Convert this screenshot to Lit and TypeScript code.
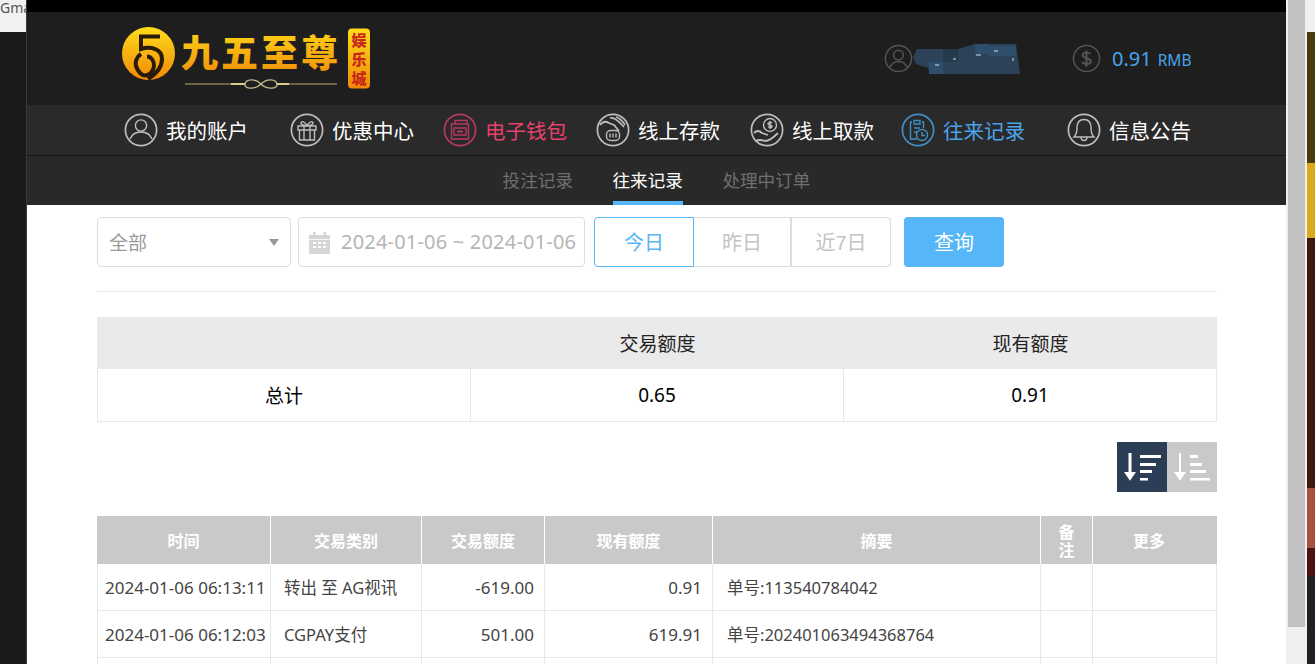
import { LitElement, html, css, svg } from "lit";
import { customElement } from "lit/decorators.js";

const ring = (color: string, inner: unknown) => html`<svg class="ic" viewBox="0 0 34 34" fill="none" stroke=${color} stroke-width="1.4">
  <circle cx="17" cy="17" r="15.6" stroke-width="1.7"></circle>${inner}</svg>`;

const icons: Record<string, unknown> = {
  user: svg`<circle cx="17" cy="12.5" r="5.6"/><path d="M6 26c2-5 6-7 11-7s9 2 11 7"/>`,
  gift: svg`<path d="M8 13h18v4H8zM9.500 17v10h15V17M14 13v14M20 13v14"/><path d="M17 12.500c-2-4-6-5-6-2.500 0 2 3 2.500 6 2.500zM17 12.500c2-4 6-5 6-2.500 0 2-3 2.500-6 2.500z"/>`,
  wallet: svg`<path d="M12 11V7.500h12V11M8.500 11h17v15h-17zM11 15h12v7H11z"/><path d="M14 18.500h6" stroke-width="2"/>`,
  dep: svg`<path d="M4 12c3-4 6-4 9-2l5 2 5 6M14 5c3-1 8 2 14 9M20 4c3 1 6 3 9 8" stroke-width="1.800"/><rect x="10.500" y="17.500" width="13" height="10" rx="4"/><path d="M14 20.500v4M17 20.500v4M20 20.500v4"/>`,
  wd: svg`<circle cx="20" cy="12" r="6.500"/><path d="M20 8v8M22 10c-1-1-4-1-4 .7s4 1 4 2.800-3 1-4 0"/><path d="M4 20c3-3 6-2 8 0l6 2M6 28c3-2 6-1 9 0 4 0 8-3 13-8" stroke-width="1.800"/>`,
  rec: svg`<path d="M11 9H9.500v17H16M21 9h1.500v6M13 7.500h6V11h-6zM13 15h6M13 19h3"/><circle cx="21" cy="22" r="5.500"/><path d="M21 19v3.500h3"/>`,
  bell: svg`<path d="M17 6.500c-5 0-7 4-7 8.500 0 5-1 7-3 9h20c-2-2-3-4-3-9 0-4.500-2-8.500-7-8.500z"/><path d="M14 24c0 2 1 3.500 3 3.500s3-1.500 3-3.500"/>`,
};

const navs = [
  { w: 166, k: "user", t: "我的账户" },
  { w: 153, k: "gift", t: "优惠中心" },
  { w: 153, k: "wallet", t: "电子钱包", c: "pink" },
  { w: 154, k: "dep", t: "线上存款" },
  { w: 151, k: "wd", t: "线上取款" },
  { w: 166, k: "rec", t: "往来记录", c: "blue" },
  { w: 130, k: "bell", t: "信息公告" },
];

const rows = [
  ["2024-01-06 06:13:11", "转出 至 AG视讯", "-619.00", "0.91", "单号:113540784042"],
  ["2024-01-06 06:12:03", "CGPAY支付", "501.00", "619.91", "单号:202401063494368764"],
  ["", "", "", "", ""],
];

@customElement("app-root")
export class AppRoot extends LitElement {
  static styles = css`
    :host {
      display: block;
      width: 1315px;
      height: 664px;
      overflow: hidden;
      background: #1a1a1a;
      font-family: "Liberation Sans", "Noto Sans CJK SC", sans-serif;
    }
    .screen { display: flex; height: 664px; align-items: stretch; }
    .left { width: 27px; flex: none; background: #1a1a1a; border-right: 1px solid #3a3a3a; box-sizing: border-box; }
    .tab { height: 32px; width: 26px; background: #f1f1f3; color: #555; font-family: "Noto Sans", sans-serif; font-size: 14px; line-height: 16px; overflow: hidden; white-space: nowrap; }
    .modal { width: 1259px; flex: none; background: #fff; height: 664px; overflow: hidden; }
    .blackbar { height: 12px; background: #000; }
    .head { height: 93px; background: #1e1e1e; display: flex; align-items: center; }
    .logo { width: 250px; height: 68px; margin-left: 94px; display: block; flex: none; }
    .logo-text { font-family: "Noto Sans CJK SC", sans-serif; font-weight: 900; }
    .who { margin-left: 513px; display: flex; align-items: center; flex: none; }
    .face { width: 29px; height: 29px; display: block; flex: none; }
    .blur { width: 107px; height: 30px; display: block; flex: none; margin-top: 1px; }
    .bal { margin-left: 52px; display: flex; align-items: center; gap: 11px; color: #4aa3ea; font-family: "Noto Sans", sans-serif; }
    .coin { width: 29px; height: 29px; display: block; flex: none; }
    .bal b { font-weight: 400; font-size: 20px; }
    .bal span { font-size: 15.500px; margin-left: 6px; }
    .nav { height: 51px; box-sizing: border-box; background: #2a2a2a; display: flex; padding-left: 97px; border-bottom: 1px solid #151515; }
    .nav-i { display: flex; align-items: center; gap: 8px; flex: none; color: #fff; font-size: 20.500px; box-sizing: border-box; white-space: nowrap; }
    .ic { width: 34px; height: 34px; display: block; flex: none; }
    .pink { color: #e8416c; }
    .blue { color: #4aa3ea; }
    .sub { height: 49px; background: #292929; display: flex; justify-content: center; gap: 39.500px; font-size: 17.600px; color: #6f6f6f; }
    .sub div { height: 49px; line-height: 50px; box-sizing: border-box; }
    .sub .on { color: #fff; border-bottom: 4px solid #56b6f7; }
    .body { padding: 12px 69px 0 70px; }
    .filters { display: flex; align-items: flex-start; height: 50px; }
    .box { box-sizing: border-box; height: 50px; border: 1px solid #ddd; border-radius: 4px; display: flex; align-items: center; color: #b5b5b5; font-size: 19px; padding-bottom: 2px; }
    .sel { width: 194px; padding: 0 11px 2px; justify-content: space-between; color: #999; }
    .arrow { width: 0; height: 0; border: 5px solid transparent; border-top: 7px solid #999; border-bottom: 0; margin-top: 3px; }
    .date { width: 287px; margin-left: 7px; padding-left: 9px; gap: 10px; white-space: nowrap; font-family: "Noto Sans", sans-serif; font-size: 20px; letter-spacing: .2px; }
    .date svg { width: 23px; height: 23px; display: block; flex: none; margin-top: 2px; }
    .tabs { display: flex; margin-left: 9px; }
    .tb { box-sizing: border-box; height: 50px; border: 1px solid #ddd; border-left: 0; display: flex; align-items: center; justify-content: center; color: #c4c4c4; font-size: 20px; padding-bottom: 2px; }
    .w98 { width: 98px; border-right-width: 2px; }
    .w99 { width: 99px; border-radius: 0 4px 4px 0; }
    .first { width: 100px; border: 1px solid #56b6f7; color: #56b6f7; border-radius: 4px 0 0 4px; }
    .query { width: 100px; height: 50px; margin-left: 13px; border-radius: 4px; background: #56b6f7; color: #fff; font-size: 20px; display: flex; align-items: center; justify-content: center; padding-bottom: 2px; box-sizing: border-box; }
    .hr { height: 1px; background: #e8e8e8; margin-top: 24px; }
    .sum { margin-top: 25px; display: grid; grid-template-columns: 374px 373px 373px; border-bottom: 1px solid #e8e8e8; box-sizing: border-box; }
    .sum > div { display: flex; align-items: center; justify-content: center; font-size: 19px; color: #222; box-sizing: border-box; }
    .sum .th { height: 52px; background: #eaeaea; padding-bottom: 2px; }
    .sum .td { height: 52px; border-right: 1px solid #e8e8e8; color: #000; font-family: "Noto Sans", sans-serif; }
    .sum .td.f { border-left: 1px solid #e8e8e8; font-family: "Liberation Sans", "Noto Sans CJK SC", sans-serif; padding-bottom: 2px; }
    .sorts { display: flex; justify-content: flex-end; margin-top: 20px; }
    .sorts > div { width: 50px; height: 50px; background: #c9c9c9; }
    .sorts > .on { background: #2c3e55; }
    .sorts svg { width: 50px; height: 50px; display: block; }
    table { margin-top: 24px; width: 1120px; border-collapse: separate; border-spacing: 0; table-layout: fixed; font-size: 17px; color: #444; font-family: "Noto Sans", "Noto Sans CJK SC", sans-serif; }
    th { height: 48px; box-sizing: border-box; background: #c9c9c9; color: #fff; font-size: 16px; font-weight: 700; padding: 3px 0 0; border-right: 1px solid #fff; font-family: "Liberation Sans", "Noto Sans CJK SC", sans-serif; line-height: 18px; }
    th:last-child { border-right: 0; padding-right: 12px; }
    td { height: 47px; box-sizing: border-box; padding: 0 10px; border-right: 1px solid #e8e8e8; border-bottom: 1px solid #e8e8e8; white-space: nowrap; }
    td:first-child { border-left: 1px solid #e8e8e8; }
    td.t { padding: 0 0 0 7px; }
    td.k { padding-left: 13px; font-size: 16.500px; }
    td.n { text-align: right; }
    td.m { padding-left: 14px; font-size: 16.500px; }
    .right { flex: 1; display: flex; min-width: 0; }
    .track { width: 21px; background: #f0f0f0; flex: none; box-sizing: border-box; padding: 0 2px; }
    .thumb { height: 627px; background: #c1c1c1; }
    .strip { flex: 1; display: flex; flex-direction: column; }
    .s0 { height: 32px; background: #f0f0f0; }
    .s1 { height: 131px; background: #4a3a10; }
    .s2 { height: 75px; background: #dba91a; }
    .s3 { height: 250px; background: #3c1a10; }
    .s4 { height: 60px; background: #a85040; }
    .s5 { height: 28px; background: #4c1212; }
    .s6 { height: 88px; background: #1f2024; }
  `;

  render() {
    const cols = [174, 151, 123, 168, 328, 52, 124];
    const heads = ["时间", "交易类别", "交易额度", "现有额度", "摘要", "备<br>注", "更多"];
    return html`<div class="screen">
      <div class="left"><div class="tab">Gma</div></div>
      <div class="modal">
        <div class="blackbar"></div>
        <div class="head">
          ${this.logo()}
          <div class="who">
            <svg class="face" viewBox="0 0 30 30" fill="none" stroke="#555" stroke-width="1.500"><circle cx="15" cy="15" r="13.500"/><circle cx="15" cy="11.500" r="5"/><path d="M6 24c2-4 5-6 9-6s7 2 9 6"/></svg>
            <svg class="blur" viewBox="0 0 107 30"><path fill="#2b4258" d="M0 13l4-8h41V5l17-5h41l4 30H17l-2-6-12-4z"/><path fill="#2f4e6c" d="M16 18h14v12H16zM62 0h14v10H62zM76 2h27v10H76z"/><path fill="#263a4d" d="M30 5h15v13H30z"/><path stroke="#cfe0ee" stroke-width="1" d="M40 15h3M63 11h5M81 7h4M100 14v3M22 21h4"/></svg>
          </div>
          <div class="bal">
            <svg class="coin" viewBox="0 0 30 30" fill="none" stroke="#555" stroke-width="1.500"><circle cx="15" cy="15" r="13.500"/><path stroke-width="2" d="M19 10.500c-1-2-8-2.500-8 1 0 4 8.500 2.500 8.500 6.500 0 3.500-7.500 3-9 .5M15 6.500v17"/></svg>
            <div><b>0.91</b><span>RMB</span></div>
          </div>
        </div>
        <div class="nav">
          ${navs.map((n) => html`<div class="nav-i ${n.c ?? ""}" style="width:${n.w}px">
            ${ring(n.c === "pink" ? "#b8395f" : n.c === "blue" ? "#3f8fc4" : "#bdbdbd", icons[n.k])}<span>${n.t}</span></div>`)}
        </div>
        <div class="sub"><div>投注记录</div><div class="on">往来记录</div><div>处理中订单</div></div>
        <div class="body">
          <div class="filters">
            <div class="box sel"><span>全部</span><i class="arrow"></i></div>
            <div class="box date">
              <svg viewBox="0 0 23 23" fill="#d6d6d6"><path d="M1 4h4V1h2.500v3h8V1H18v3h4v19H1z"/><path fill="#fff" d="M1 8h21v.8H1zM5 11h3v2H5zM10 11h3v2h-3zM15 11h3v2h-3zM5 15h3v2H5zM10 15h3v2h-3zM15 15h3v2h-3z"/></svg>
              <span>2024-01-06 ~ 2024-01-06</span>
            </div>
            <div class="tabs"><div class="tb first">今日</div><div class="tb w98">昨日</div><div class="tb w99">近7日</div></div>
            <div class="query">查询</div>
          </div>
          <div class="hr"></div>
          <div class="sum">
            <div class="th"></div><div class="th">交易额度</div><div class="th">现有额度</div>
            <div class="td f">总计</div><div class="td">0.65</div><div class="td">0.91</div>
          </div>
          <div class="sorts">
            <div class="on"><svg viewBox="0 0 50 50" fill="#fff"><path d="M11.500 11h3v19H19l-6 8.700L7 30h4.500zM23 13h21v3H23zM23 21h16v3H23zM23 28h12v3H23zM23 36h8v2.500h-8z"/></svg></div>
            <div><svg viewBox="0 0 50 50" fill="#fff"><path d="M12 11h2v19h5l-6 8.700L7 30h5zM23 13h8v3h-8zM23 21h12v3H23zM23 28h16v3H23zM23 36h20v2.500H23z"/></svg></div>
          </div>
          <table>
            <colgroup>${cols.map((w) => html`<col style="width:${w}px" />`)}</colgroup>
            <tr>${heads.map((h) => html`<th .innerHTML=${h}></th>`)}</tr>
            ${rows.map((r) => html`<tr>
              <td class="t">${r[0]}</td><td class="k">${r[1]}</td><td class="n">${r[2]}</td><td class="n">${r[3]}</td><td class="m">${r[4]}</td><td></td><td></td>
            </tr>`)}
          </table>
        </div>
      </div>
      <div class="right">
        <div class="track"><div class="thumb"></div></div>
        <div class="strip">
          <div class="s0"></div><div class="s1"></div><div class="s2"></div><div class="s3"></div><div class="s4"></div><div class="s5"></div><div class="s6"></div>
        </div>
      </div>
    </div>`;
  }

  logo() {
    return html`<svg class="logo" viewBox="0 0 250 68">
      <defs>
        <linearGradient id="g" x1="0" y1="0" x2="0" y2="1"><stop offset="0" stop-color="#ffdc1a"/><stop offset="1" stop-color="#f08a08"/></linearGradient>
      </defs>
      <circle cx="27.500" cy="28.500" r="26.500" fill="url(#g)"/>
      <path d="M39 11.500H20V24c10-3 21 0 21 10 0 8-6 15-14 20" fill="none" stroke="#2a1a08" stroke-width="4"/>
      <path d="M20 29c-5 3-6 9-5 12 2 6 6 9.500 9 9.500 5 0 9-5 9-10 0-5-3-9-7-9" fill="none" stroke="#2a1a08" stroke-width="4"/>
      <text x="60" y="42" class="logo-text" font-size="37" fill="url(#g)" textLength="157">九五至尊</text>
      <path d="M64 59h55M160 59h56" stroke="#b5ab78" stroke-width="1.200"/>
      <path d="M140 59c-6-6-15-5-16 0s10 6 16 0 15-5 16 0-10 6-16 0z" fill="none" stroke="#c4b98a" stroke-width="1.400"/>
      <path d="M110 59h14M156 59h12" stroke="#d8cc90" stroke-width="2.200"/>
      <rect x="227" y="3.500" width="22" height="60" rx="4" fill="url(#g)"/>
      <text x="238" y="21" font-size="15" fill="#c8281a" text-anchor="middle" class="logo-text">娱</text>
      <text x="238" y="40" font-size="15" fill="#c8281a" text-anchor="middle" class="logo-text">乐</text>
      <text x="238" y="59" font-size="15" fill="#c8281a" text-anchor="middle" class="logo-text">城</text>
    </svg>`;
  }
}
